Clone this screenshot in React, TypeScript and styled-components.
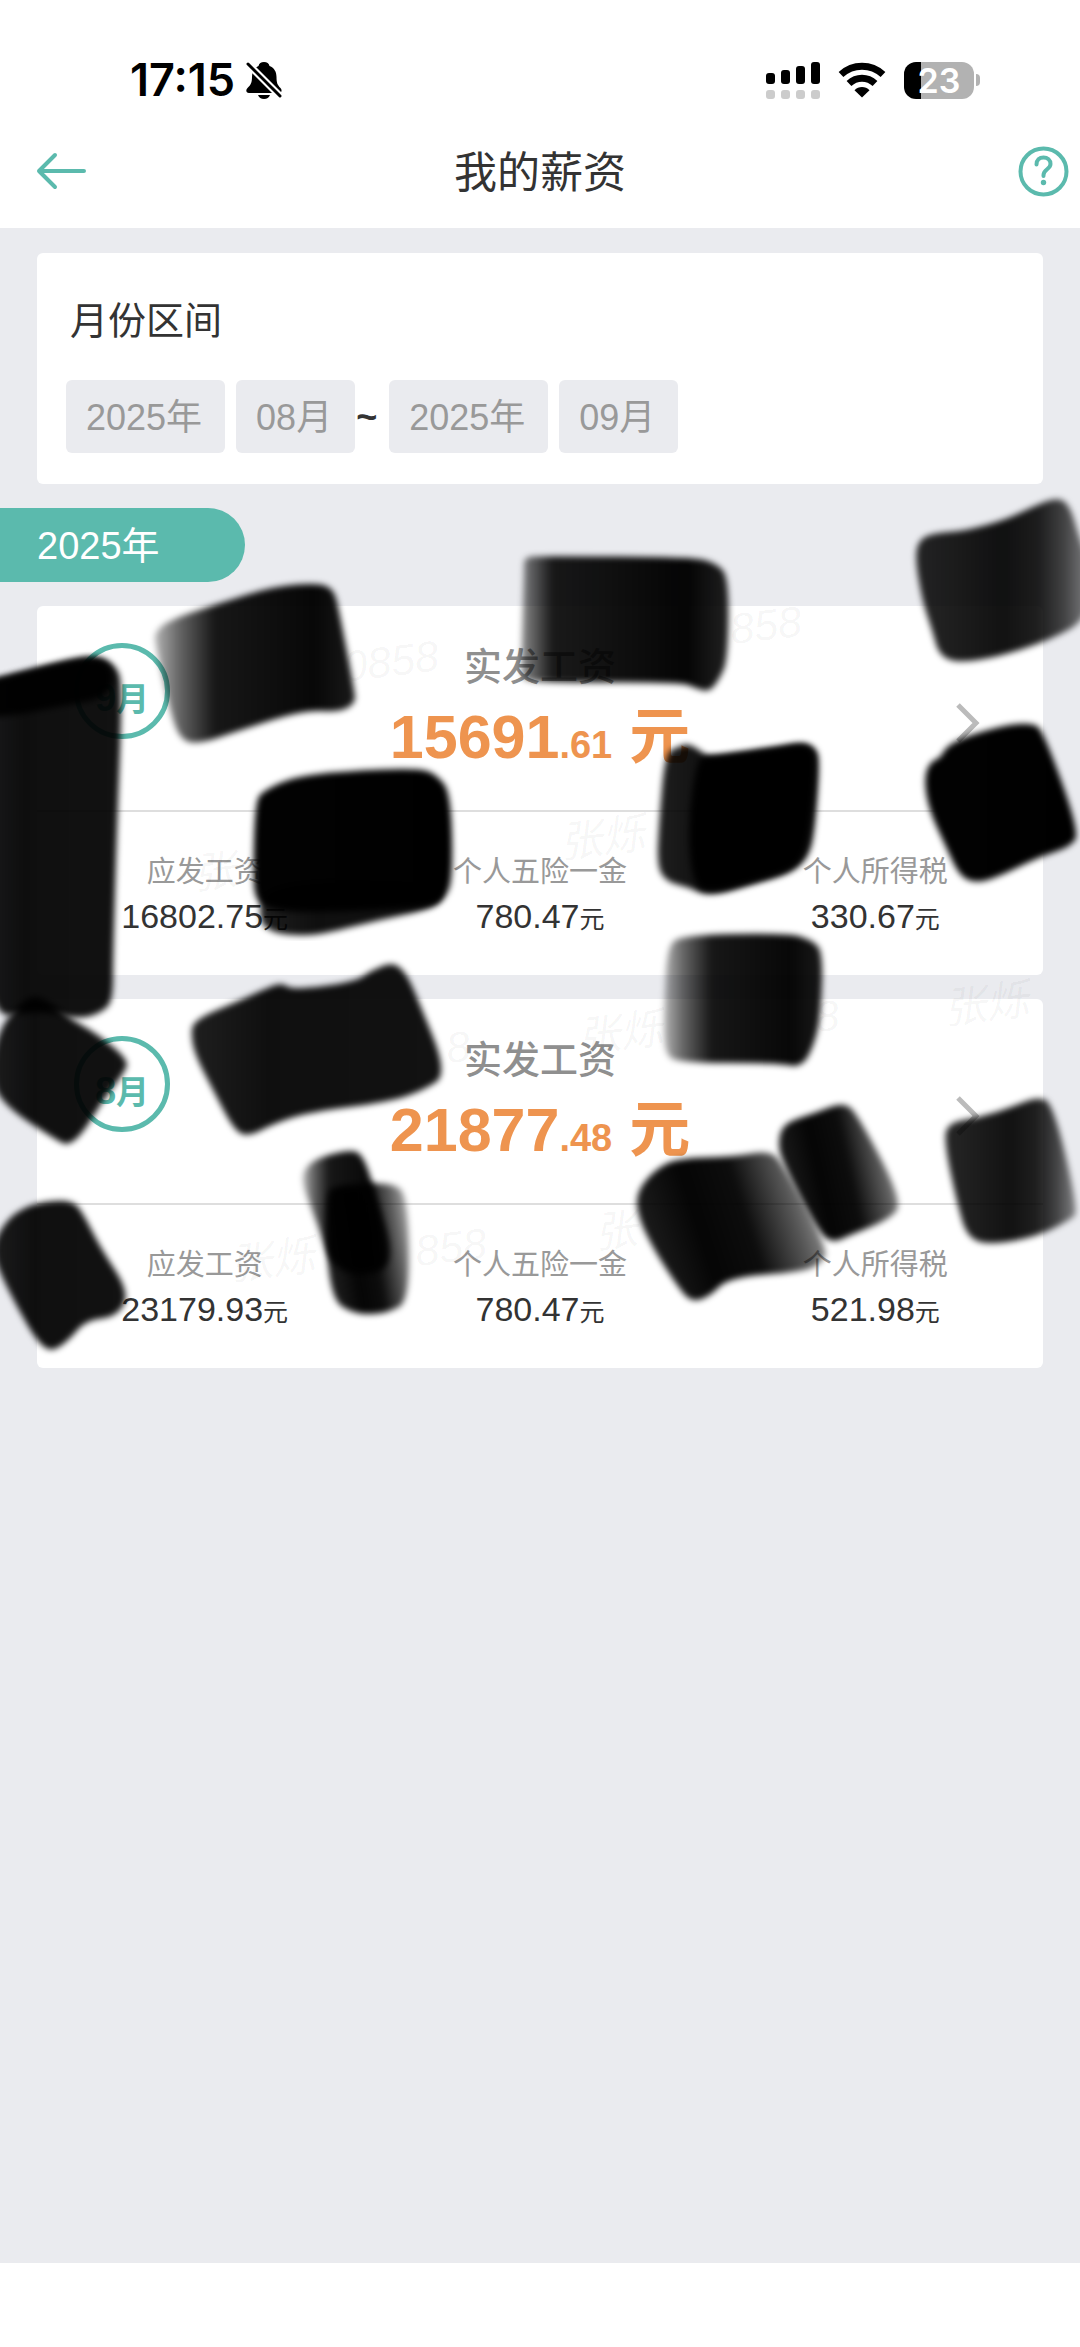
import React from "react";
import styled, { createGlobalStyle } from "styled-components";

const teal = "#5bbaad";
const grey = "#eaebef";
const orange = "#ee944f";

const GlobalStyle = createGlobalStyle`
  * { box-sizing: border-box; }
  body {
    margin: 0;
    background: #fff;
    color: #333;
    font-family: "Liberation Sans", "Noto Sans CJK SC", sans-serif;
  }
  button { font: inherit; border: 0; background: none; padding: 0; cursor: pointer; }
  h1, h2, h3, p, dl, dt, dd { margin: 0; font-weight: inherit; }
`;

const Page = styled.div`
  display: flex;
  flex-direction: column;
  min-height: 100vh;
  overflow-x: hidden;
`;

const StatusBar = styled.div`
  display: flex;
  align-items: center;
  justify-content: space-between;
  height: 114px;
  padding: 46px 100px 0 130px;
  color: #000;
  font-family: Inter, sans-serif;
`;

const StatusGroup = styled.div<{ $gap: number }>`
  display: flex;
  align-items: center;
  gap: ${(p) => p.$gap}px;
`;

const Clock = styled.time`
  font-size: 45px;
  font-weight: 600;
  line-height: 48px;
`;

const Battery = styled.div`
  display: flex;
  align-items: center;
  gap: 2px;
`;

const BatteryBody = styled.div`
  width: 70px;
  height: 37px;
  border-radius: 12px;
  background: linear-gradient(90deg, #000 0 17px, #b2b2b2 17px);
  color: #fff;
  font-size: 34px;
  font-weight: 600;
  line-height: 37px;
  text-align: center;
`;

const BatteryTip = styled.div`
  width: 4px;
  height: 12px;
  border-radius: 0 4px 4px 0;
  background: #b2b2b2;
`;

const NavBar = styled.header`
  display: grid;
  grid-template-columns: 1fr auto 1fr;
  align-items: center;
  height: 114px;
  padding: 0 11px;
`;

const Title = styled.h1`
  padding-top: 3px;
  font-size: 43px;
  line-height: 60px;
`;

const IconButton = styled.button<{ $end?: boolean }>`
  display: flex;
  justify-self: ${(p) => (p.$end ? "end" : "start")};
  padding-left: ${(p) => (p.$end ? 0 : 25)}px;
  color: ${teal};
`;

const Content = styled.main`
  position: relative;
  flex: 1;
  padding: 25px 0;
  background: ${grey};
`;

const Card = styled.section`
  margin: 0 37px 24px;
  border-radius: 6px;
  background: #fff;
`;

const FilterCard = styled(Card)`
  padding: 40px 29px 31px;
`;

const FilterTitle = styled.h2`
  padding-left: 4px;
  font-size: 38px;
  line-height: 56px;
`;

const Range = styled.div`
  display: flex;
  align-items: center;
  margin-top: 31px;
`;

const Chip = styled.button`
  height: 73px;
  padding: 3px 23px 0 20px;
  border-radius: 6px;
  background: ${grey};
  color: #999;
  font-size: 36px;
  line-height: 70px;
  white-space: nowrap;

  & + & { margin-left: 11px; }
`;

const Tilde = styled.span`
  width: 34px;
  padding-left: 1px;
  font-size: 36px;
  font-weight: 700;
  line-height: 73px;
`;

const YearTag = styled.h2`
  width: 245px;
  height: 74px;
  margin-bottom: 24px;
  padding-left: 37px;
  border-radius: 0 37px 37px 0;
  background: ${teal};
  color: #fff;
  font-size: 38px;
  line-height: 76px;
`;

const PayLink = styled.a`
  display: block;
  color: inherit;
  text-decoration: none;
`;

const PayHead = styled.div`
  display: grid;
  grid-template-columns: 1fr auto 1fr;
  align-items: start;
  height: 206px;
  padding: 37px 62px 8px 37px;
  border-bottom: 2px solid #dedede;
`;

const Month = styled.div`
  display: flex;
  align-items: baseline;
  justify-content: center;
  width: 96px;
  height: 96px;
  border: 5px solid ${teal};
  border-radius: 50%;
  color: ${teal};
  font-size: 38px;
  font-weight: 700;
  line-height: 100px;

  small { font-size: 33px; }
`;

const Net = styled.div`
  margin-right: -25px;
  text-align: center;
`;

const NetLabel = styled.h3`
  color: #8f8f8f;
  font-size: 38px;
  font-weight: 500;
  line-height: 48px;
`;

const NetAmount = styled.p`
  color: ${orange};
  font-size: 61px;
  font-weight: 700;
  line-height: 92px;
  white-space: nowrap;

  small { font-size: 38px; }
`;

const Go = styled.span`
  display: flex;
  align-self: center;
  justify-self: end;
`;

const Parts = styled.dl`
  display: grid;
  grid-template-columns: repeat(3, 1fr);
  height: 163px;
  padding-top: 38px;
  text-align: center;
`;

const PartLabel = styled.dt`
  color: #999;
  font-size: 29px;
  line-height: 44px;
`;

const PartValue = styled.dd`
  font-size: 34px;
  line-height: 44px;

  small { font-size: 25px; }
`;

const HomeArea = styled.footer`
  height: 84px;
  background: #fff;
`;

const Watermark = styled.span<{ $x: number; $y: number }>`
  position: absolute;
  left: ${(p) => p.$x}px;
  top: ${(p) => p.$y}px;
  color: rgba(0, 0, 0, 0.045);
  font-size: 43px;
  font-style: italic;
  line-height: 48px;
  white-space: nowrap;
  transform: rotate(-7deg);
  pointer-events: none;
`;

const MarkerLayer = styled.svg`
  position: absolute;
  top: 0;
  left: 0;
  width: 100%;
  pointer-events: none;
`;

const records = [
  { month: "9", whole: "15691", cents: ".61", parts: [["应发工资", "16802.75"], ["个人五险一金", "780.47"], ["个人所得税", "330.67"]] },
  { month: "8", whole: "21877", cents: ".48", parts: [["应发工资", "23179.93"], ["个人五险一金", "780.47"], ["个人所得税", "521.98"]] },
];

const watermarks: [string, number, number][] = [
  ["0858", 343, 409],
  ["858", 730, 373],
  ["张", 193, 620],
  ["张烁", 559, 586],
  ["张烁", 577, 781],
  ["8", 815, 764],
  ["8", 446, 795],
  ["张烁", 943, 752],
  ["张烁", 229, 1008],
  ["858", 415, 995],
  ["张", 594, 979],
];

type Shade = "flat" | "black" | "left" | "right" | "softRight" | "leftSteep";

const strokes: { shade: Shade; points: string }[] = [
  { shade: "left", points: "155,632 169,620 220,603 275,586 320,583 334,590 339,610 355,693 355,703 341,712 303,710 241,730 196,745 179,738 169,707 155,643" },
  { shade: "flat", points: "-20,682 0,678 76,658 103,656 119,670 121,687 121,727 117,827 113,960 113,995 107,1010 80,1020 40,1010 -20,1020" },
  { shade: "flat", points: "-20,682 0,678 76,658 100,658 112,668 114,685 100,700 60,706 20,715 -20,718" },
  { shade: "black", points: "255,800 265,790 293,777 344,771 420,768 437,775 451,793 453,880 444,900 427,907 379,910 327,912 290,912 268,908 256,900 253,880" },
  { shade: "flat", points: "265,880 440,880 444,900 427,910 379,920 327,933 303,936 272,933 258,920" },
  { shade: "leftSteep", points: "524,557 540,556 692,557 716,563 729,577 728,660 719,680 709,692 695,688 681,682 527,683 521,675 522,640 524,570" },
  { shade: "softRight", points: "915,557 919,540 933,533 964,531 1005,520 1032,507 1057,497 1070,505 1080,540 1090,560 1090,618 1050,640 998,657 957,663 939,655 933,633 922,600" },
  { shade: "flat", points: "665,753 678,747 688,743 702,752 709,757 774,748 802,742 815,747 820,760 815,830 809,857 791,873 760,882 709,897 688,887 667,882 657,867 659,823" },
  { shade: "black", points: "698,757 709,757 774,748 802,744 813,749 816,762 810,830 803,857 791,870 760,880 709,894 692,882 688,820" },
  { shade: "black", points: "946,747 964,737 1005,725 1032,723 1043,730 1080,833 1070,847 1039,857 998,877 977,883 960,877 946,847 929,810 924,780 929,763 941,757" },
  { shade: "flat", points: "0,1027 21,1003 34,995 52,1003 72,1020 96,1033 129,1060 124,1073 103,1100 83,1133 69,1145 59,1142 0,1103 -10,1070" },
  { shade: "flat", points: "191,1037 193,1020 241,1000 269,987 282,983 293,990 355,982 372,970 393,962 406,973 417,997 448,1074 424,1090 389,1102 310,1112 275,1123 248,1137 234,1130 213,1090 196,1057" },
  { shade: "left", points: "667,947 681,935 788,933 812,940 823,952 821,1013 815,1043 802,1068 778,1063 678,1063 664,1053 664,1007" },
  { shade: "left", points: "303,1170 317,1158 348,1150 362,1153 374,1187 396,1263 365,1277 331,1267 318,1225 303,1187" },
  { shade: "right", points: "325,1193 337,1185 393,1182 408,1197 410,1300 389,1313 355,1315 329,1298" },
  { shade: "flat", points: "0,1230 14,1213 38,1202 72,1200 83,1213 100,1247 130,1293 117,1317 86,1320 69,1340 52,1352 38,1343 17,1307 0,1273 -8,1250" },
  { shade: "right", points: "636,1193 654,1170 678,1158 733,1157 771,1150 784,1167 828,1249 822,1263 802,1272 729,1277 709,1297 691,1302 678,1287 654,1250 638,1217" },
  { shade: "right", points: "778,1140 784,1123 815,1113 843,1102 857,1113 904,1203 888,1220 850,1235 833,1243 819,1233 781,1160" },
  { shade: "softRight", points: "945,1147 946,1123 981,1117 1012,1107 1036,1097 1053,1102 1079,1212 1070,1220 1036,1237 988,1245 967,1237 957,1203" },
];

const shadeStops: Record<Shade, [number, number][]> = {
  flat: [[0, 0.88], [0.3, 0.94], [1, 0.93]],
  black: [[0, 0.99], [1, 1]],
  left: [[0, 0.3], [0.12, 0.6], [0.3, 0.91], [0.8, 0.97], [1, 0.9]],
  leftSteep: [[0, 0.45], [0.15, 0.9], [0.8, 0.98], [1, 0.87]],
  right: [[0, 0.9], [0.25, 0.98], [0.5, 0.95], [0.75, 0.65], [1, 0.25]],
  softRight: [[0, 0.85], [0.5, 0.93], [0.7, 0.88], [0.85, 0.72], [1, 0.45]],
};

// Smooths a point list into a closed curve through the midpoints of its sides.
function toPath(points: string) {
  const p = points.split(" ").map((s) => s.split(",").map(Number));
  const mid = (a: number[], b: number[]) => `${(a[0] + b[0]) / 2} ${(a[1] + b[1]) / 2}`;
  const start = mid(p[p.length - 1], p[0]);
  return `M${start}` + p.map((q, i) => `Q${q[0]} ${q[1]} ${mid(q, p[(i + 1) % p.length])}`).join("") + "Z";
}

function MutedBell() {
  return (
    <svg width="36" height="38" viewBox="0 0 36 38" aria-label="静音">
      <path d="M18 1c3 0 5 1.500 5.500 4 5 2 7 6 7 11 0 6 1 8 4 11 2 2 1 5-1.500 5H3c-3 0-3.500-3-1.500-5C5 24 6 21 6 16 6 11 8 7 12.500 5 13 2.500 15 1 18 1z" fill="#000" />
      <path d="M12 34h12c-1 2.600-3 4-6 4s-5-1.400-6-4z" fill="#000" />
      <path d="M0 1l6 13L0 8z" fill="#fff" />
      <path d="M2 3 34 35" stroke="#fff" strokeWidth="7" />
      <path d="M2 3 34 35" stroke="#000" strokeWidth="3" strokeLinecap="round" />
    </svg>
  );
}

function Signal() {
  return (
    <svg width="54" height="37" viewBox="0 0 54 37" aria-label="信号">
      {[11, 8, 4, 0].map((top, i) => (
        <g key={top}>
          <rect x={i * 15} y={top} width="9" height={22 - top} rx="3" fill="#000" />
          <rect x={i * 15} y="28" width="9" height="9" rx="3" fill="#ccc" />
        </g>
      ))}
    </svg>
  );
}

function Wifi() {
  return (
    <svg width="48" height="36" viewBox="0 0 48 36" aria-label="无线网络">
      <g fill="none" stroke="#000" strokeWidth="7">
        <path d="M3 12.500C15 1.500 33 1.500 45 12.500" />
        <path d="M11 21.500C18.500 14.500 29.500 14.500 37 21.500" />
      </g>
      <path d="M24 35.500l-7.500-7.200C20.500 24 27.500 24 31.500 28.300z" fill="#000" />
    </svg>
  );
}

export default function App() {
  return (
    <>
      <GlobalStyle />
      <Page>
        <StatusBar>
          <StatusGroup $gap={11}>
            <Clock>17:15</Clock>
            <MutedBell />
          </StatusGroup>
          <StatusGroup $gap={18}>
            <Signal />
            <Wifi />
            <Battery>
              <BatteryBody>23</BatteryBody>
              <BatteryTip />
            </Battery>
          </StatusGroup>
        </StatusBar>
        <NavBar>
          <IconButton aria-label="返回">
            <svg width="52" height="40" viewBox="0 0 52 40" fill="none" stroke="currentColor" strokeWidth="4" strokeLinecap="round" strokeLinejoin="round">
              <path d="M48 20H3M19 4 3 20 19 36" />
            </svg>
          </IconButton>
          <Title>我的薪资</Title>
          <IconButton $end aria-label="帮助">
            <svg width="51" height="51" viewBox="0 0 51 51" fill="none" stroke="currentColor" strokeWidth="4" strokeLinecap="round">
              <circle cx="25.500" cy="25.500" r="23" />
              <path d="M18.500 18.500c0-4.500 3-7 7-7s7 2.500 7 6.500c0 5-7 5.500-7 11v1" />
              <circle cx="25.500" cy="36.500" r="2.700" fill="currentColor" stroke="none" />
            </svg>
          </IconButton>
        </NavBar>
        <Content>
          <FilterCard>
            <FilterTitle>月份区间</FilterTitle>
            <Range>
              <Chip>2025年</Chip>
              <Chip>08月</Chip>
              <Tilde>~</Tilde>
              <Chip>2025年</Chip>
              <Chip>09月</Chip>
            </Range>
          </FilterCard>
          <YearTag>2025年</YearTag>
          {records.map((r) => (
            <Card key={r.month}>
              <PayLink href="#detail">
                <PayHead>
                  <Month>{r.month}<small>月</small></Month>
                  <Net>
                    <NetLabel>实发工资</NetLabel>
                    <NetAmount>{r.whole}<small>{r.cents}</small> 元</NetAmount>
                  </Net>
                  <Go>
                    <svg width="26" height="42" viewBox="0 0 26 42" fill="none" stroke="#bbb" strokeWidth="5">
                      <path d="M3 3 21 21 3 39" />
                    </svg>
                  </Go>
                </PayHead>
                <Parts>
                  {r.parts.map(([label, value]) => (
                    <div key={label}>
                      <PartLabel>{label}</PartLabel>
                      <PartValue>{value}<small>元</small></PartValue>
                    </div>
                  ))}
                </Parts>
              </PayLink>
            </Card>
          ))}
          {watermarks.map(([text, x, y]) => (
            <Watermark key={`${x}-${y}`} $x={x} $y={y} aria-hidden>{text}</Watermark>
          ))}
          <MarkerLayer viewBox="0 228 1080 1200" aria-hidden>
            <defs>
              <filter id="soft" x="-10%" y="-10%" width="120%" height="120%">
                <feGaussianBlur stdDeviation="3" />
              </filter>
              {(Object.keys(shadeStops) as Shade[]).map((name) => (
                <linearGradient key={name} id={name} x1="0" x2="1" y1={name === "right" ? 0.25 : 0} y2="0">
                  {shadeStops[name].map(([offset, opacity]) => (
                    <stop key={offset} offset={offset} stopColor="#000" stopOpacity={opacity} />
                  ))}
                </linearGradient>
              ))}
            </defs>
            {strokes.map((s) => (
              <path key={s.points} d={toPath(s.points)} fill={`url(#${s.shade})`} filter="url(#soft)" />
            ))}
          </MarkerLayer>
        </Content>
        <HomeArea />
      </Page>
    </>
  );
}
